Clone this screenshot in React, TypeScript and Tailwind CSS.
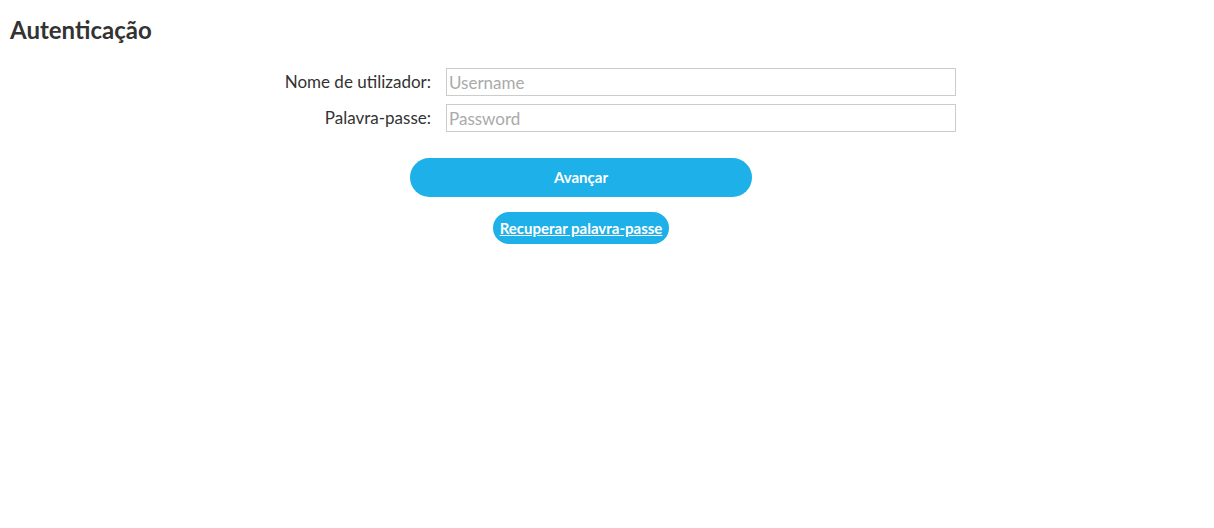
import React, { useState } from 'react';

const App = () => {
  const [username, setUsername] = useState('');
  const [password, setPassword] = useState('');

  return (
    <div className="min-h-screen bg-white text-[#333333]" style={{ fontFamily: 'Lato, "Noto Sans", sans-serif' }}>
      {/* Page title */}
      <h1 className="px-[10px] pt-[16px] text-[24px] font-bold leading-[28px] text-[#333333]">Autenticação</h1>

      {/* Login form */}
      <form className="ml-[206px] mt-[24px] w-[750px]" onSubmit={(e) => e.preventDefault()}>
        <div className="space-y-[8px]">
          <div className="flex items-center gap-[15px]">
            <label htmlFor="username" className="w-[225px] text-right text-[17px]">
              Nome de utilizador:
            </label>
            <input
              id="username"
              type="text"
              placeholder="Username"
              value={username}
              onChange={(e) => setUsername(e.target.value)}
              className="h-[28px] w-[510px] border border-[#cccccc] px-[2px] text-[17px] outline-none placeholder:text-[#aaaaaa]"
            />
          </div>
          <div className="flex items-center gap-[15px]">
            <label htmlFor="password" className="w-[225px] text-right text-[17px]">
              Palavra-passe:
            </label>
            <input
              id="password"
              type="password"
              placeholder="Password"
              value={password}
              onChange={(e) => setPassword(e.target.value)}
              className="h-[28px] w-[510px] border border-[#cccccc] px-[2px] text-[17px] outline-none placeholder:text-[#aaaaaa]"
            />
          </div>
        </div>

        <div className="mt-[26px] flex flex-col items-center">
          <button
            type="submit"
            className="h-[39px] w-[342px] rounded-full bg-[#1eb0e8] text-[15px] font-bold text-white"
          >
            Avançar
          </button>
          <a
            href="#"
            className="mt-[15px] flex h-[32px] w-[176px] items-center justify-center rounded-full bg-[#1eb0e8] text-[15px] font-bold text-white underline"
          >
            Recuperar palavra-passe
          </a>
        </div>
      </form>
    </div>
  );
};

export default App;
